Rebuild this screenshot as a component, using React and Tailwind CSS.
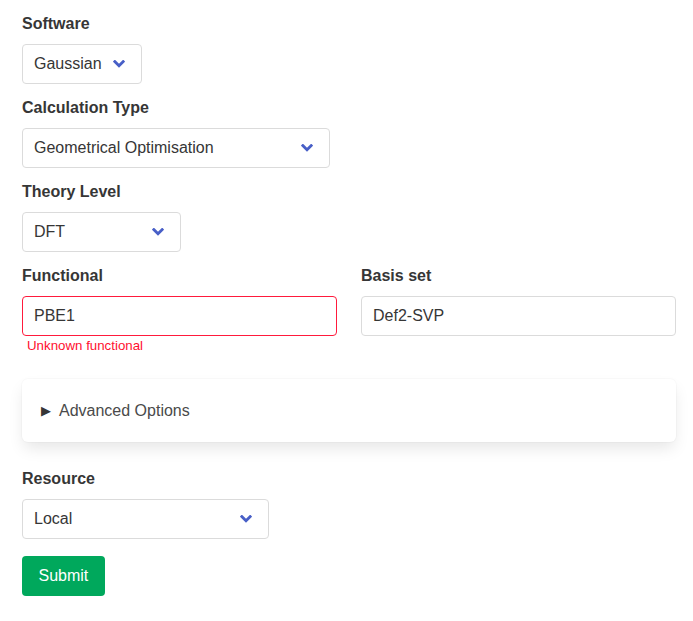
const Chevron = () => (
  <svg width="12" height="8" viewBox="0 0 12 8" className="shrink-0">
    <path d="M1.8 1.6 L6 5.8 L10.2 1.6" fill="none" stroke="#485fc7" strokeWidth="2.8" strokeLinecap="square" />
  </svg>
);

const Label = ({ children }) => (
  <div className="h-6 leading-6 mb-[8px] text-base font-bold text-[#363636]">{children}</div>
);

const Select = ({ value, width }) => (
  <div
    className="h-10 flex items-center justify-between pl-[11px] pr-[16px] border border-[#dbdbdb] rounded-[4px] bg-white text-base text-[#363636]"
    style={{ width }}
  >
    <span>{value}</span>
    <Chevron />
  </div>
);

const Input = ({ value, error }) => (
  <div
    className={`h-10 flex items-center px-[11px] border rounded-[4px] bg-white text-base text-[#363636] ${
      error ? "border-[#ff1a3c]" : "border-[#dbdbdb]"
    }`}
  >
    {value}
  </div>
);

export default function App() {
  return (
    <div
      className="w-[693px] min-h-[621px] bg-white pl-[22px] pt-[12px]"
      style={{ fontFamily: '"Liberation Sans", Arial, sans-serif' }}
    >
      <div className="w-[654px] flex flex-col">
        <Label>Software</Label>
        <Select value="Gaussian" width={120} />

        <div className="mt-[12px]">
          <Label>Calculation Type</Label>
          <Select value="Geometrical Optimisation" width={308} />
        </div>

        <div className="mt-[12px]">
          <Label>Theory Level</Label>
          <Select value="DFT" width={159} />
        </div>

        <div className="mt-[12px] grid grid-cols-[315px_315px] gap-x-[24px]">
          <div>
            <Label>Functional</Label>
            <Input value="PBE1" error />
            <div className="mt-[2px] pl-[5px] text-[13.3px] leading-4 text-[#ff0f2f]">Unknown functional</div>
          </div>
          <div>
            <Label>Basis set</Label>
            <Input value="Def2-SVP" />
          </div>
        </div>

        <div className="mt-[25px] h-[63px] rounded-[6px] bg-white flex items-center pl-[19px] shadow-[0_8px_16px_-2px_rgba(10,10,10,0.1),0_0_0_1px_rgba(10,10,10,0.02)]">
          <span className="text-[13px] leading-4 text-[#363636] mr-[8px]">▶</span>
          <span className="text-base text-[#4a4a4a]">Advanced Options</span>
        </div>

        <div className="mt-[25px]">
          <Label>Resource</Label>
          <Select value="Local" width={247} />
        </div>

        <div className="mt-[17px]">
          <button className="h-10 px-[16.5px] rounded-[4px] bg-[#00a85c] text-white text-base">Submit</button>
        </div>
      </div>
    </div>
  );
}
